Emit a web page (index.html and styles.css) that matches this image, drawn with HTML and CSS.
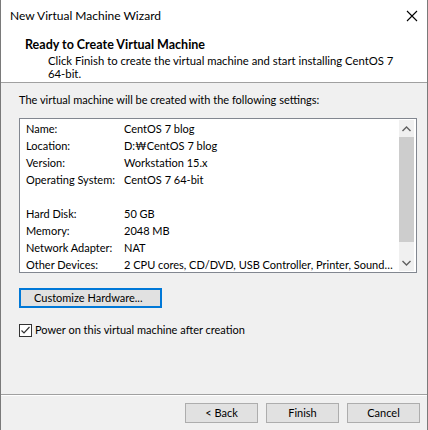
FILE: index.html
```html
<!DOCTYPE html>
<html>
<head>
<meta charset="utf-8">
<link rel="stylesheet" href="styles.css">
</head>
<body>
<div class="window">
  <div class="top">
    <div class="titlebar">
      <span class="title">New Virtual Machine Wizard</span>
      <svg class="close" width="12" height="12" viewBox="0 0 12 12"><path d="M1 1L11 11M11 1L1 11" stroke="#000" stroke-width="1.1"/></svg>
    </div>
    <div class="heading">Ready to Create Virtual Machine</div>
    <div class="desc">Click Finish to create the virtual machine and start installing CentOS 7<br>64-bit.</div>
  </div>
  <div class="content">
    <div class="intro">The virtual machine will be created with the following settings:</div>
    <div class="listbox">
      <div class="rows">
        <div class="row"><span class="k">Name:</span><span class="v">CentOS 7 blog</span></div>
        <div class="row"><span class="k">Location:</span><span class="v">D:₩CentOS 7 blog</span></div>
        <div class="row"><span class="k">Version:</span><span class="v">Workstation 15.x</span></div>
        <div class="row"><span class="k">Operating System:</span><span class="v">CentOS 7 64-bit</span></div>
        <div class="row"><span class="k"></span><span class="v"></span></div>
        <div class="row"><span class="k">Hard Disk:</span><span class="v">50 GB</span></div>
        <div class="row"><span class="k">Memory:</span><span class="v">2048 MB</span></div>
        <div class="row"><span class="k">Network Adapter:</span><span class="v">NAT</span></div>
        <div class="row"><span class="k">Other Devices:</span><span class="v">2 CPU cores, CD/DVD, USB Controller, Printer, Sound…</span></div>
      </div>
      <div class="scrollbar">
        <div class="arrow"><svg width="9" height="6" viewBox="0 0 9 6"><path d="M0.5 5L4.5 1L8.5 5" fill="none" stroke="#606060" stroke-width="1.4"/></svg></div>
        <div class="track"><div class="thumb"></div></div>
        <div class="arrow"><svg width="9" height="6" viewBox="0 0 9 6"><path d="M0.5 1L4.5 5L8.5 1" fill="none" stroke="#606060" stroke-width="1.4"/></svg></div>
      </div>
    </div>
    <button class="btn custom">Customize Hardware...</button>
    <label class="check"><span class="box"><svg width="11" height="11" viewBox="0 0 11 11"><path d="M1.5 5.5L4 8L9.5 2" fill="none" stroke="#333" stroke-width="1.2"/></svg></span><span>Power on this virtual machine after creation</span></label>
  </div>
  <div class="footer">
    <button class="btn">&lt; Back</button>
    <button class="btn">Finish</button>
    <button class="btn">Cancel</button>
  </div>
</div>
</body>
</html>
```
FILE: styles.css
```css
html, body {
  margin: 0;
  padding: 0;
  background: #f0f0f0;
}
body {
  font-family: Lato, "Noto Sans", sans-serif;
  font-size: 11px;
  color: #000;
}
.window {
  width: 428px;
  height: 430px;
  box-sizing: border-box;
  border-left: 1px solid #7a7a7a;
  border-right: 1px solid #7a7a7a;
  display: flex;
  flex-direction: column;
  background: #f0f0f0;
  overflow: hidden;
}
.top {
  background: #fff;
  height: 82px;
  border-bottom: 1px solid #a0a0a0;
  flex: none;
}
.titlebar {
  height: 32px;
  display: flex;
  align-items: center;
  justify-content: space-between;
  padding: 0 9px 0 9px;
}
.title {
  font-size: 12px;
  line-height: 16px;
}
.heading {
  font-weight: bold;
  font-size: 12.5px;
  line-height: 16px;
  padding-left: 24px;
  margin-top: 5px;
  white-space: nowrap;
}
.desc {
  font-size: 11.3px;
  line-height: 13px;
  padding-left: 47px;
  margin-top: 1px;
  white-space: nowrap;
}
.content {
  flex: 1;
  min-height: 0;
  padding: 9px 10px 0 18px;
  display: flex;
  flex-direction: column;
  align-items: flex-start;
}
.intro {
  line-height: 16px;
  white-space: nowrap;
}
.listbox {
  margin-top: 10px;
  width: 398px;
  height: 155px;
  flex: none;
  box-sizing: border-box;
  border: 1px solid #828790;
  padding: 1px;
  background: #fff;
  display: flex;
}
.rows {
  flex: 1;
  min-width: 0;
  overflow: hidden;
  padding-left: 5px;
}
.row {
  display: flex;
  height: 17px;
  line-height: 17px;
  white-space: nowrap;
}
.k {
  width: 98px;
  flex: none;
}
.scrollbar {
  width: 15px;
  flex: none;
  background: #f0f0f0;
  display: flex;
  flex-direction: column;
  margin-right: 1px;
}
.arrow {
  height: 17px;
  display: flex;
  align-items: center;
  justify-content: center;
  flex: none;
}
.track {
  flex: 1;
}
.thumb {
  background: #cdcdcd;
  height: 105px;
}
.btn {
  font-family: inherit;
  font-size: 11px;
  color: #000;
  background: #e1e1e1;
  border: 1px solid #adadad;
  box-sizing: border-box;
  height: 20px;
  padding: 0;
  line-height: 16px;
  white-space: nowrap;
}
.custom {
  margin-top: 15px;
  border: 2px solid #0078d7;
  width: 143px;
  text-align: left;
  padding-left: 13px;
  flex: none;
}
.check {
  margin-top: 14px;
  display: flex;
  align-items: center;
  line-height: 16px;
  white-space: nowrap;
}
.box {
  width: 13px;
  height: 13px;
  box-sizing: border-box;
  border: 1px solid #333;
  background: #fff;
  display: flex;
  align-items: center;
  justify-content: center;
  margin-right: 3px;
}
.box svg {
  display: block;
}
.footer {
  flex: none;
  box-sizing: border-box;
  height: 36px;
  border-top: 1px solid #a0a0a0;
  box-shadow: inset 0 1px 0 #fff;
  display: flex;
  justify-content: flex-end;
  align-items: flex-start;
  gap: 8px;
  padding: 8px 7px 0 0;
}
.footer .btn {
  width: 73px;
  height: 20px;
}
```
